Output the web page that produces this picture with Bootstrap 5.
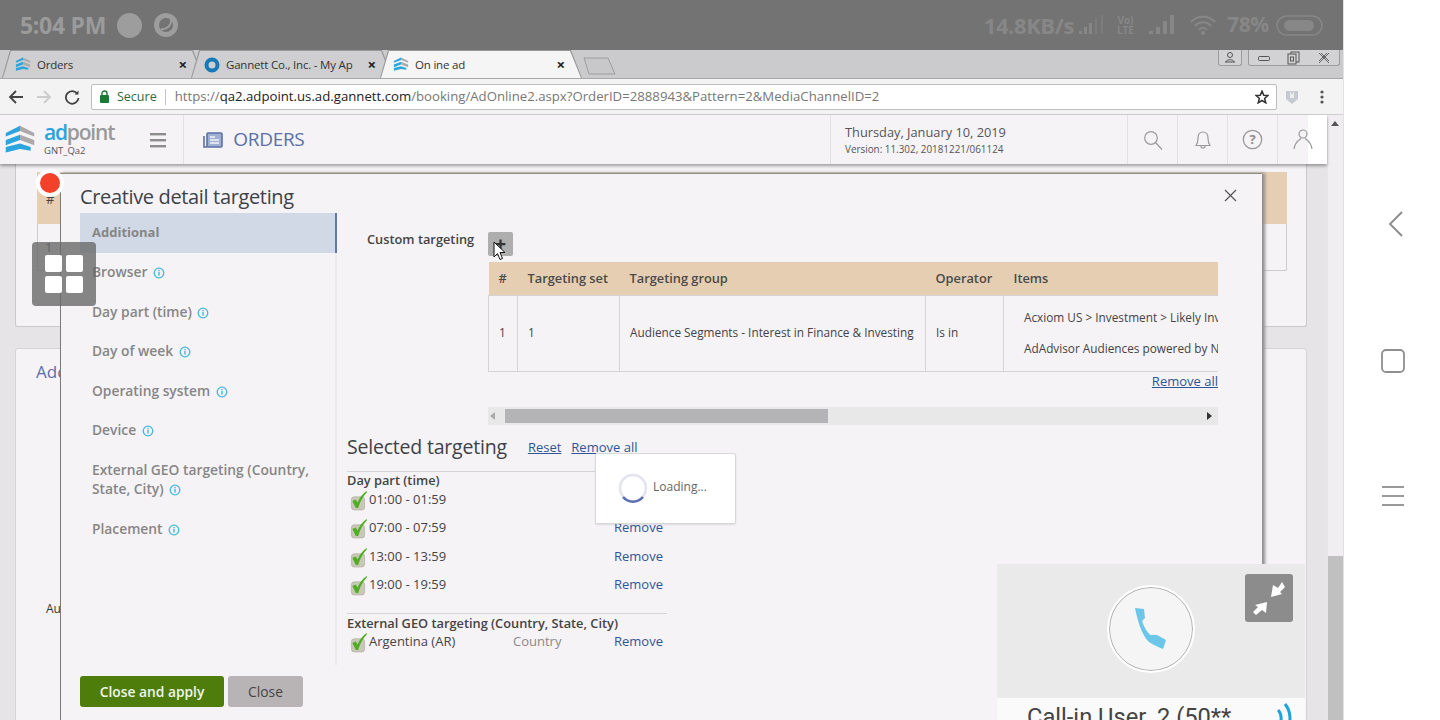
<!DOCTYPE html>
<html lang="en">
<head>
    <meta charset="UTF-8">
    <meta name="viewport" content="width=device-width, initial-scale=1.0">
    <title>Online ad</title>
    <link href="https://cdn.jsdelivr.net/npm/bootstrap@5.3.1/dist/css/bootstrap.min.css" rel="stylesheet">
    <style>
        html, body { height: 720px; overflow: hidden; }
        body { font-family: "Open Sans", "Liberation Sans", sans-serif; font-size: 13px; color: #444; background: #fff; }
        a { color: #2f5597; }
        .screen { width: 1440px; height: 720px; }
        .phone-area { width: 1344px; border-right: 1px solid #e2e2e2; }

        /* android bars */
        .status-bar { height: 50px; background: #737373; color: #878787; padding: 0 20px; font-weight: 700; }
        .status-time { font-size: 23px; color: #9b9b9b; letter-spacing: -.3px; }
        .status-speed { font-size: 22px; letter-spacing: -.4px; }
        .status-pct { font-size: 21px; letter-spacing: -.3px; }
        .status-lte { font-size: 10px; line-height: 10px; text-align: center; width: 19px; }
        .dot-icon { width: 25px; height: 25px; border-radius: 50%; background: #9d9d9d; }
        .sm5 { margin-left: 5px; } .sm7 { margin-left: 7px; } .sm10 { margin-left: 10px; } .sm11 { margin-left: 11px; } .sm12 { margin-left: 12px; } .sm14 { margin-left: 14px; }
        .nav-side { width: 95px; padding-left: 37px; padding-top: 211px; gap: 112px; }
        .nav-back { margin-left: 7px; }

        /* chrome tabs */
        .tab-strip { height: 28px; background: #cbcbcd; padding-left: 2px; }
        .tab-item { width: 202px; margin-right: -13px; padding: 1px 17px 0 13px; font-size: 11.5px; color: #333; letter-spacing: -.2px; position: relative; }
        .tab-item > * { position: relative; z-index: 1; }
        .tab-item::before, .tab-item::after { content: ""; position: absolute; top: 0; bottom: 0; left: 0; right: 0; clip-path: polygon(0 100%, 8px 0, calc(100% - 11px) 0, 100% 100%); }
        .tab-item::before { background: #989898; }
        .tab-item::after { background: #cfcfd1; top: 1px; left: 1px; right: 1px; }
        .tab-item.tab-on { z-index: 2; }
        .tab-item.tab-on::after { background: #f5f5f5; }
        .tab-label { white-space: nowrap; overflow: hidden; width: 132px; margin-left: 6px; }
        .tab-x { font-size: 15px; font-weight: 700; color: #222; margin-left: auto; line-height: 1; }
        .tab-new { margin-left: 14px; margin-top: 7px; }
        .win-btns { margin-left: auto; margin-right: 3px; height: 16px; gap: 6px; }
        .win-box { height: 16px; border: 1px solid #9c9c9c; border-top: 0; border-radius: 0 0 3px 3px; background: #d2d2d4; }
        .win-user { width: 24px; }
        .win-main { width: 92px; }

        /* address bar */
        .addr-bar { height: 37px; background: #f3f3f3; border-top: 1px solid #a8a8a8; border-bottom: 1px solid #cfcfcf; padding-left: 8px; padding-right: 19px; }
        .addr-next { margin-left: 12px; }
        .addr-box { width: 1186px; height: 26px; margin-left: 11px; background: #fff; border: 1px solid #bdbdbd; border-radius: 2px; padding: 0 7px 0 8px; font-size: 13.2px; }
        .addr-secure { color: #2e6b3e; padding: 0 8px 0 8px; border-right: 1px solid #c4c4c4; margin-right: 9px; line-height: 16px; font-size: 12.5px; }
        .addr-url { color: #777; white-space: nowrap; }
        .addr-url b { font-weight: 400; color: #222; }
        .addr-ext { margin-left: 7px; }

        /* app header */
        .app-head { height: 49px; background: #f5f3f6; box-shadow: 0 2px 3px rgba(0,0,0,.35); position: relative; z-index: 3; }
        .logo-word { font-size: 21px; line-height: 21px; font-weight: 600; color: #9a9a9a; letter-spacing: -1.2px; }
        .logo-word span { color: #29a3dd; }
        .logo-sub { font-size: 9.5px; line-height: 15px; color: #555; letter-spacing: 0; }
        .head-burger { margin-left: 36px; }
        .head-cell { height: 49px; border-left: 1px solid #e3e1e4; }
        .head-orders { margin-left: 17px; padding-left: 19px; }
        .head-title { font-size: 19px; font-weight: 500; color: #5b6fa9; letter-spacing: -.3px; margin-left: 10px; }
        .head-date { width: 297px; padding: 2px 0 0 14px; line-height: 1.2; }
        .head-date div:first-child { font-size: 12.8px; color: #555; margin-bottom: 3px; }
        .head-date div:last-child { font-size: 9.9px; color: #555; }
        .head-icon { width: 50px; }
        .head-end { background: linear-gradient(90deg, #f5f3f6 30px, #fff 30px); }

        /* page behind the dialog */
        .page-wrap { height: 556px; background: #e6e4e6; padding: 0 20px 0 15px; position: relative; overflow: hidden; }
        .bg-panel { height: 163px; background: #f5f3f6; border: 1px solid #c9c9c9; border-top: 0; border-radius: 0 0 3px 3px; padding: 8px 19px 0 21px; }
        .bg-thead { height: 52px; background: #e6ceb3; padding: 18px 0 0 9px; }
        .bg-tbody { height: 47px; border: 1px solid #ccc; border-top: 0; padding: 14px 0 0 7px; }
        .bg-panel2 { height: 400px; margin-top: 21px; background: #f5f3f6; border: 1px solid #d4d4d4; border-radius: 3px 3px 0 0; padding: 10px 20px; }
        .bg-title { font-size: 17px; color: #5b6fa9; }
        .bg-au { margin-top: 215px; padding-left: 10px; color: #333; font-size: 12px; }
        .v-scroll { width: 16px; flex: none; background: #f0eef1; border-left: 1px solid #e8e6e9; padding-top: 6px; }
        .v-up { width: 0; height: 0; border: 4px solid transparent; border-top: 0; border-bottom: 5px solid #555; margin-left: 3px; }
        .v-thumb { height: 164px; background: #c0c0c0; }

        /* dialog */
        .tgt-dialog { position: absolute; left: 60px; top: 9px; width: 1202px; height: 560px; background: #f5f3f6; border-left: 1px solid #7a7a7a; border-top: 1px solid #8c8c8c; box-shadow: 3px 0 3px #8e8e8e; padding: 0 44px 0 19px; }
        .tgt-title { height: 39px; font-size: 20px; color: #3d4246; letter-spacing: -.35px; line-height: 46px; }
        .tgt-close { right: 25px; top: 15px; }
        .side-col { width: 257px; height: 452px; flex: none; border-right: 2px solid #ebe9ec; }
        .side-item { padding: 9.5px 12px 10.5px; line-height: 19.5px; font-weight: 600; color: #868686; font-size: 13.8px; }
        .side-item.side-on { padding: 10px 12px; background: #d0d9e5; border-right: 2px solid #5a7ab0; margin-right: -2px; font-size: 13px; font-weight: 700; }
        .side-item svg { vertical-align: -2px; margin-left: 2px; }
        .main-col { padding-left: 10px; flex: 1; min-width: 0; }
        .custom-label { width: 141px; flex: none; padding: 17px 0 0 20px; font-weight: 600; color: #444; font-size: 12.8px; white-space: nowrap; }
        .custom-right { width: 730px; flex: none; padding-top: 19px; }
        .plus-btn { width: 25px; height: 24px; background: #aeaeae; border-radius: 2px; font-size: 20px; line-height: 24px; font-weight: 700; color: #333; text-align: center; position: relative; margin-bottom: 6px; }
        .plus-cursor { position: absolute; left: 5px; top: 9px; }
        .tgt-table { width: 730px; overflow: hidden; height: 111px; }
        .tgt-table table { width: 860px; table-layout: fixed; font-size: 11.8px; color: #444; }
        .tgt-table th { height: 33px; background: #e6ceb3; font-weight: 600; padding: 1px 10px 0; vertical-align: middle; font-size: 12.8px; color: #4a4a4a; white-space: nowrap; }
        .tgt-table td { height: 76px; border: 1px solid #d4d4d6; padding: 0 10px; vertical-align: middle; white-space: nowrap; overflow: hidden; }
        .tgt-table td:first-child { border-left: 1px solid #d4d4d6; }
        .item-line { padding-left: 10px; line-height: 31px; }
        .rm-all { text-align: right; margin-top: -1px; line-height: 18px; }
        .h-scroll { height: 18px; margin-top: 17px; background: #e8e8e8; }
        .h-thumb { width: 323px; height: 14px; background: #b4b4b6; margin-left: 17px; position: relative; top: 2px; }
        .h-arrow-l, .h-arrow-r { width: 0; height: 0; border: 4px solid transparent; }
        .h-arrow-l { border-right: 5px solid #aaa; border-left: 0; position: absolute; left: 2px; top: 5px; }
        .h-arrow-r { border-left: 5px solid #333; border-right: 0; position: absolute; right: 6px; top: 5px; }
        .sel-head { height: 46px; line-height: 44px; padding-bottom: 2px; }
        .sel-title { font-size: 19.5px; color: #3d4246; margin-right: 21px; letter-spacing: -.2px; }
        .sel-link { font-size: 13px; margin-right: 10px; }
        .sel-list { width: 320px; border-top: 1px solid #d4d4d6; }
        .sel-group { font-weight: 600; font-size: 12.8px; color: #444; line-height: 17px; margin-bottom: 1px; }
        .sel-sep + .sel-group { margin-bottom: 0; }
        .sel-row { height: 28.3px; line-height: 18px; padding-left: 3px; }
        .sel-row svg { flex: none; margin: 1px 2px 0 0; }
        .sel-name { width: 144px; }
        .sel-kind { width: 101px; color: #888; }
        .sel-sep { border-top: 1px solid #d4d4d6; margin-top: 10px; padding-top: 1px; }
        .loading-box { position: absolute; left: 534px; top: 279px; width: 141px; height: 71px; background: #fff; border: 1px solid #d8d8d8; border-radius: 2px; padding: 19px 0 0 22px; font-size: 12px; color: #666; box-shadow: 0 1px 2px rgba(0,0,0,.1); gap: 5px; }
        .loading-box span { margin-top: 5px; }
        .dlg-foot { margin-top: 11px; gap: 4px; }
        .dlg-btn-go, .dlg-btn-no { height: 31px; font-size: 13.8px; font-weight: 600; line-height: 29px; padding: 0; border: 0; border-radius: 3px; }
        .dlg-btn-go { width: 144px; background: #4e7d0c; color: #f1f5ea; }
        .dlg-btn-no { width: 75px; background: #b8b4b5; color: #444; font-weight: 400; }

        /* floating stuff */
        .rec-dot { position: absolute; left: 36px; top: 169px; width: 28px; height: 28px; border-radius: 50%; background: #f4412a; border: 4px solid #fff; z-index: 5; }
        .grid-fab { position: absolute; left: 32px; top: 242px; width: 64px; height: 64px; border-radius: 4px; background: rgba(105,105,105,.8); z-index: 5; display: grid; grid-template-columns: 17px 17px; gap: 4px; padding: 13px; }
        .grid-fab i { background: #fff; border-radius: 2px; display: block; height: 17px; }
        .call-box { position: absolute; left: 997px; top: 564px; width: 308px; height: 156px; z-index: 5; background: #eaeaea; overflow: hidden; }
        .call-ring { width: 84px; height: 84px; margin: 23px auto 0; border-radius: 50%; background: #f5f5f5; border: 1.5px solid #b0b0b0; outline: 2px solid #fff; }
        .call-shrink { position: absolute; left: 248px; top: 10px; width: 48px; height: 48px; background: #8c8c8c; border-radius: 3px; }
        .call-name { position: absolute; left: 0; right: 0; top: 134px; height: 30px; background: #fafafa; padding-left: 30px; font-family: Roboto, "Liberation Sans", sans-serif; font-size: 23.7px; line-height: 38px; color: #444; white-space: nowrap; }
        .call-wave { position: absolute; right: 10px; top: 5px; }
    </style>
</head>
<body>

    <!-- iconos repetidos -->
    <svg width="0" height="0" class="position-absolute">
        <symbol id="ico-info" viewBox="0 0 12 12">
            <circle cx="6" cy="6" r="4.8" fill="none" stroke="#45b6dc" stroke-width="1.3"/>
            <rect x="5.3" y="5" width="1.4" height="3.6" fill="#45b6dc"/>
            <rect x="5.3" y="3" width="1.4" height="1.3" fill="#45b6dc"/>
        </symbol>
        <symbol id="ico-check" viewBox="0 0 18 21">
            <rect x="1.5" y="6" width="14" height="14" rx="3" fill="#c9c8b8" stroke="#a9a89c" stroke-width=".6"/>
            <path d="M2.5 10.5 L6 9 L8 12 C10 7.5 13 3.5 17.5 0 L17.9 1.2 C13.5 6 10.5 11.5 8.6 18 L6.2 18 Z" fill="#4fae22"/>
        </symbol>
        <symbol id="ico-logo" viewBox="0 0 18 16">
            <path d="M9 0 L17 4 L17 6 L9 3 Z" fill="#aaa"/>
            <path d="M9 0 L1 4 L1 6 L9 3 Z" fill="#2aa5de"/>
            <path d="M9 5 L17 8 L17 11 L9 8 Z" fill="#aaa"/>
            <path d="M9 5 L1 8 L1 11 L9 8 Z" fill="#2aa5de"/>
            <path d="M1 12 L9 10 L9 13 L1 15 Z" fill="#2aa5de"/>
            <path d="M9 10 L15 12 L15 14 L9 13 Z" fill="#2aa5de"/>
        </symbol>
    </svg>

    <div class="screen d-flex position-relative">
        <div class="phone-area d-flex flex-column">

            <!-- Barra de estado -->
            <div class="status-bar d-flex align-items-center">
                <span class="status-time">5:04 PM</span>
                <span class="dot-icon sm11"></span>
                <svg class="sm11" width="26" height="26" viewBox="0 0 26 26"><circle cx="13" cy="13" r="12" fill="#9d9d9d"/><circle cx="13" cy="13" r="7" fill="#737373"/><path d="M8 17 C14 18 19 13 18 6" stroke="#9d9d9d" stroke-width="2" fill="none"/></svg>
                <div class="ms-auto d-flex align-items-center">
                    <span class="status-speed">14.8KB/s</span>
                    <svg class="sm5" width="27" height="22" viewBox="0 0 27 22"><rect x="0" y="17" width="3" height="3" fill="#878787"/><rect x="5" y="13" width="3" height="7" fill="#878787"/><rect x="10" y="9" width="3" height="11" fill="#878787"/><rect x="16" y="4" width="2" height="16" fill="#7d7d7d"/><rect x="22" y="1" width="2" height="19" fill="#7d7d7d"/></svg>
                    <span class="status-lte sm10">Vo)<br>LTE</span>
                    <svg class="sm14" width="28" height="22" viewBox="0 0 28 22"><rect x="0" y="17" width="4" height="3" fill="#878787"/><rect x="7" y="13" width="4" height="7" fill="#878787"/><rect x="14" y="7" width="4" height="13" fill="#878787"/><rect x="21" y="1" width="4" height="19" fill="#878787"/></svg>
                    <svg class="sm12" width="28" height="22" viewBox="0 0 28 22" fill="none" stroke="#878787" stroke-width="2.2"><path d="M2 8 C8 1 20 1 26 8"/><path d="M6 12 C10 7 18 7 22 12"/><path d="M10 16 C12 13 16 13 18 16"/><circle cx="14" cy="19" r="1" fill="#878787"/></svg>
                    <span class="status-pct sm10">78%</span>
                    <svg class="sm7" width="47" height="21" viewBox="0 0 47 21"><rect x="1" y="1" width="45" height="19" rx="9.5" fill="none" stroke="#878787" stroke-width="1.6"/><rect x="8" y="5" width="30" height="11" rx="5.5" fill="#878787"/></svg>
                </div>
            </div>

            <!-- Pestanas -->
            <div class="tab-strip d-flex">
                <div class="tab-item d-flex align-items-center">
                    <svg width="16" height="15"><use href="#ico-logo"/></svg>
                    <span class="tab-label">Orders</span>
                    <span class="tab-x">×</span>
                </div>
                <div class="tab-item d-flex align-items-center">
                    <svg width="16" height="16" viewBox="0 0 16 16"><circle cx="8" cy="8" r="5.5" fill="none" stroke="#1679b8" stroke-width="4"/></svg>
                    <span class="tab-label">Gannett Co., Inc. - My Ap</span>
                    <span class="tab-x">×</span>
                </div>
                <div class="tab-item tab-on d-flex align-items-center">
                    <svg width="16" height="15"><use href="#ico-logo"/></svg>
                    <span class="tab-label">On ine ad</span>
                    <span class="tab-x">×</span>
                </div>
                <svg class="tab-new" width="33" height="18" viewBox="0 0 33 18"><path d="M1 1 H25 L32 17 H6 Z" fill="#c8c8ca" stroke="#9e9e9e"/></svg>
                <div class="win-btns d-flex">
                    <div class="win-box win-user d-flex align-items-center justify-content-center">
                        <svg width="14" height="13" viewBox="0 0 14 13" fill="none" stroke="#555"><circle cx="7" cy="4" r="2.5"/><path d="M2 11 h10 M3 11 C3 8 11 8 11 11"/></svg>
                    </div>
                    <div class="win-box win-main d-flex align-items-center justify-content-around">
                        <svg width="12" height="8" viewBox="0 0 12 8" fill="none" stroke="#555"><rect x=".5" y="2.5" width="11" height="4" rx="1"/></svg>
                        <svg width="13" height="14" viewBox="0 0 13 14" fill="none" stroke="#555"><rect x="4" y="1" width="8" height="10"/><rect x="1" y="3" width="8" height="10" fill="#d2d2d4"/><rect x="3.5" y="6" width="3" height="4"/></svg>
                        <svg width="14" height="12" viewBox="0 0 14 12" fill="none" stroke="#666"><path d="M2 1 L12 11 M12 1 L2 11 M4 1 L12 9 M10 1 L2 9"/></svg>
                    </div>
                </div>
            </div>

            <!-- Barra de direccion -->
            <div class="addr-bar d-flex align-items-center">
                <svg width="16" height="16" viewBox="0 0 16 16" fill="none" stroke="#444" stroke-width="1.8"><path d="M15 8 H2 M8 2 L2 8 L8 14"/></svg>
                <svg class="addr-next" width="16" height="16" viewBox="0 0 16 16" fill="none" stroke="#ccc" stroke-width="1.8"><path d="M1 8 H14 M8 2 L14 8 L8 14"/></svg>
                <svg class="addr-next" width="16" height="16" viewBox="0 0 16 16" fill="none" stroke="#444" stroke-width="1.8"><path d="M13.5 5 A6.3 6.3 0 1 0 14.5 9"/><path d="M14.5 1.5 V5.5 H10.5 Z" fill="#444" stroke="none"/></svg>
                <div class="addr-box d-flex align-items-center">
                    <svg width="9" height="13" viewBox="0 0 9 13"><rect x="0" y="5" width="9" height="8" rx="1" fill="#1a7a32"/><path d="M2 6 V3.5 a2.5 2.5 0 0 1 5 0 V6" fill="none" stroke="#1a7a32" stroke-width="1.4"/></svg>
                    <span class="addr-secure">Secure</span>
                    <span class="addr-url">https://<b>qa2.adpoint.us.ad.gannett.com</b>/booking/AdOnline2.aspx?OrderID=2888943&amp;Pattern=2&amp;MediaChannelID=2</span>
                    <svg class="ms-auto" width="14" height="14" viewBox="0 0 24 24" fill="none" stroke="#333" stroke-width="2.6"><path d="M12 2 L15 9 L22 9.5 L16.5 14.5 L18.5 22 L12 18 L5.5 22 L7.5 14.5 L2 9.5 L9 9 Z"/></svg>
                </div>
                <svg class="addr-ext" width="16" height="16" viewBox="0 0 16 16"><path d="M2 2 H14 V10 L8 15 L2 10 Z" fill="#c6c9cf"/><path d="M6 2 L8 6 L10 2 V9 H6 Z" fill="#eee"/></svg>
                <svg class="ms-auto" width="4" height="16" viewBox="0 0 4 16" fill="#555"><circle cx="2" cy="3" r="1.6"/><circle cx="2" cy="8" r="1.6"/><circle cx="2" cy="13" r="1.6"/></svg>
            </div>

            <div class="d-flex flex-grow-1">
                <div class="flex-grow-1">
                    <!-- Cabecera de la aplicacion -->
                    <div class="app-head d-flex align-items-center">
                        <svg class="ms-1" width="32" height="30"><use href="#ico-logo"/></svg>
                        <div class="ms-2">
                            <div class="logo-word"><span>ad</span>point</div>
                            <div class="logo-sub">GNT_Qa2</div>
                        </div>
                        <svg class="head-burger" width="16" height="16" viewBox="0 0 16 16" fill="#8d8d8d"><rect y="1" width="16" height="2.4"/><rect y="7" width="16" height="2.4"/><rect y="13" width="16" height="2.4"/></svg>
                        <div class="head-cell head-orders d-flex align-items-center flex-grow-1">
                            <svg width="20" height="16" viewBox="0 0 20 16" fill="none" stroke="#5b6fa9" stroke-width="1.6"><rect x="4" y="1" width="15" height="14" rx="1" fill="#9fb0d2"/><path d="M1 4 V15 H4"/><path d="M7 5 H12 M7 8 H16 M7 11 H16" stroke="#f5f3f6"/></svg>
                            <span class="head-title">ORDERS</span>
                        </div>
                        <div class="head-cell head-date d-flex flex-column justify-content-center">
                            <div>Thursday, January 10, 2019</div>
                            <div>Version: 11.302, 20181221/061124</div>
                        </div>
                        <div class="head-cell head-icon d-flex align-items-center justify-content-center">
                            <svg width="20" height="20" viewBox="0 0 20 20" fill="none" stroke="#9a9a9a" stroke-width="1.2"><circle cx="8" cy="8" r="6.3"/><path d="M12.5 12.5 L19 19.5"/></svg>
                        </div>
                        <div class="head-cell head-icon d-flex align-items-center justify-content-center">
                            <svg width="20" height="20" viewBox="0 0 20 20" fill="none" stroke="#9a9a9a" stroke-width="1.2"><path d="M3 15.5 C5 13 5 11 5 8 C5 4 7 2 10 2 C13 2 15 4 15 8 C15 11 15 13 17 15.5 Z"/><path d="M8 16 a2 2 0 0 0 4 0"/></svg>
                        </div>
                        <div class="head-cell head-icon d-flex align-items-center justify-content-center">
                            <svg width="21" height="21" viewBox="0 0 21 21"><circle cx="10.5" cy="10.5" r="9.2" fill="none" stroke="#9a9a9a" stroke-width="1.3"/><text x="10.5" y="15" text-anchor="middle" font-size="13" font-weight="700" fill="#8d8d8d" font-family="Open Sans">?</text></svg>
                        </div>
                        <div class="head-cell head-icon head-end d-flex align-items-center justify-content-center">
                            <svg width="20" height="21" viewBox="0 0 20 21" fill="none" stroke="#9a9a9a" stroke-width="1.2"><circle cx="10" cy="5" r="4"/><path d="M1 20 C2 13 6 11 8 9.5 M19 20 C18 13 14 11 12 9.5"/></svg>
                        </div>
                    </div>

                    <!-- Pagina detras del dialogo -->
                    <div class="page-wrap">
                        <div class="bg-panel">
                            <div class="bg-thead">#</div>
                            <div class="bg-tbody">1</div>
                        </div>
                        <div class="bg-panel2">
                            <div class="bg-title">Additional</div>
                            <div class="bg-au">Audience</div>
                        </div>

                        <!-- Dialogo -->
                        <div class="tgt-dialog">
                            <div class="tgt-title">Creative detail targeting</div>
                            <svg class="tgt-close position-absolute" width="13" height="13" viewBox="0 0 13 13" stroke="#555" stroke-width="1.2"><path d="M1 1 L12 12 M12 1 L1 12"/></svg>

                            <div class="d-flex">
                                <div class="side-col">
                                    <div class="side-item side-on">Additional</div>
                                    <div class="side-item">Browser <svg width="12" height="12"><use href="#ico-info"/></svg></div>
                                    <div class="side-item">Day part (time) <svg width="12" height="12"><use href="#ico-info"/></svg></div>
                                    <div class="side-item">Day of week <svg width="12" height="12"><use href="#ico-info"/></svg></div>
                                    <div class="side-item">Operating system <svg width="12" height="12"><use href="#ico-info"/></svg></div>
                                    <div class="side-item">Device <svg width="12" height="12"><use href="#ico-info"/></svg></div>
                                    <div class="side-item">External GEO targeting (Country, State, City) <svg width="12" height="12"><use href="#ico-info"/></svg></div>
                                    <div class="side-item">Placement <svg width="12" height="12"><use href="#ico-info"/></svg></div>
                                </div>

                                <div class="main-col">
                                    <div class="d-flex">
                                        <div class="custom-label">Custom targeting</div>
                                        <div class="custom-right">
                                            <div class="plus-btn">+
                                                <svg class="plus-cursor" width="13" height="20" viewBox="0 0 13 20"><path d="M1 1 V16 L4.5 12.5 L7 18.5 L9.5 17.5 L7 11.5 H12 Z" fill="#fff" stroke="#111" stroke-width="1"/></svg>
                                            </div>
                                            <div class="tgt-table">
                                                <table>
                                                    <colgroup><col style="width:29px"><col style="width:102px"><col style="width:306px"><col style="width:78px"><col style="width:345px"></colgroup>
                                                    <thead>
                                                        <tr><th>#</th><th>Targeting set</th><th>Targeting group</th><th>Operator</th><th>Items</th></tr>
                                                    </thead>
                                                    <tbody>
                                                        <tr>
                                                            <td>1</td>
                                                            <td>1</td>
                                                            <td>Audience Segments - Interest in Finance &amp; Investing</td>
                                                            <td>Is in</td>
                                                            <td>
                                                                <div class="item-line">Acxiom US &gt; Investment &gt; Likely Investors</div>
                                                                <div class="item-line">AdAdvisor Audiences powered by Neustar</div>
                                                            </td>
                                                        </tr>
                                                    </tbody>
                                                </table>
                                            </div>
                                            <div class="rm-all"><a href="#">Remove all</a></div>
                                            <div class="h-scroll position-relative">
                                                <span class="h-arrow-l"></span>
                                                <div class="h-thumb"></div>
                                                <span class="h-arrow-r"></span>
                                            </div>
                                        </div>
                                    </div>

                                    <div class="sel-head d-flex align-items-center">
                                        <span class="sel-title">Selected targeting</span>
                                        <a class="sel-link" href="#">Reset</a>
                                        <a class="sel-link" href="#">Remove all</a>
                                    </div>
                                    <div class="sel-list">
                                        <div class="sel-group">Day part (time)</div>
                                        <div class="sel-row d-flex">
                                            <svg width="17" height="20"><use href="#ico-check"/></svg>
                                            <span class="sel-name">01:00 - 01:59</span><span class="sel-kind"></span><a class="text-decoration-none" href="#">Remove</a>
                                        </div>
                                        <div class="sel-row d-flex">
                                            <svg width="17" height="20"><use href="#ico-check"/></svg>
                                            <span class="sel-name">07:00 - 07:59</span><span class="sel-kind"></span><a class="text-decoration-none" href="#">Remove</a>
                                        </div>
                                        <div class="sel-row d-flex">
                                            <svg width="17" height="20"><use href="#ico-check"/></svg>
                                            <span class="sel-name">13:00 - 13:59</span><span class="sel-kind"></span><a class="text-decoration-none" href="#">Remove</a>
                                        </div>
                                        <div class="sel-row d-flex">
                                            <svg width="17" height="20"><use href="#ico-check"/></svg>
                                            <span class="sel-name">19:00 - 19:59</span><span class="sel-kind"></span><a class="text-decoration-none" href="#">Remove</a>
                                        </div>
                                        <div class="sel-sep"></div>
                                        <div class="sel-group">External GEO targeting (Country, State, City)</div>
                                        <div class="sel-row d-flex">
                                            <svg width="17" height="20"><use href="#ico-check"/></svg>
                                            <span class="sel-name">Argentina (AR)</span><span class="sel-kind">Country</span><a class="text-decoration-none" href="#">Remove</a>
                                        </div>
                                    </div>
                                </div>
                            </div>

                            <div class="dlg-foot d-flex">
                                <button class="dlg-btn-go" type="button">Close and apply</button>
                                <button class="dlg-btn-no" type="button">Close</button>
                            </div>

                            <div class="loading-box d-flex align-items-start">
                                <svg width="30" height="30" viewBox="0 0 30 30" fill="none" stroke-width="2.5"><circle cx="15" cy="15" r="13" stroke="#e2e3ee"/><path d="M5 24 A13 13 0 0 0 25 24" stroke="#5a6fb0"/></svg>
                                <span>Loading...</span>
                            </div>
                        </div>
                    </div>
                </div>
                <div class="v-scroll d-flex flex-column">
                    <div class="v-up"></div>
                    <div class="v-thumb mt-auto"></div>
                </div>
            </div>
        </div>

        <!-- Botones de android -->
        <div class="nav-side d-flex flex-column">
            <svg class="nav-back" width="16" height="26" viewBox="0 0 16 26" fill="none" stroke="#8a8a8a" stroke-width="1.8"><path d="M14 1 L2 13 L14 25"/></svg>
            <svg width="24" height="24" viewBox="0 0 24 24" fill="none" stroke="#8f8f8f" stroke-width="1.8"><rect x="1" y="1" width="22" height="22" rx="4"/></svg>
            <svg width="24" height="22" viewBox="0 0 24 22" fill="#999"><rect x="1" y="1" width="22" height="2"/><rect x="1" y="10" width="22" height="2"/><rect x="1" y="19" width="22" height="2"/></svg>
        </div>

        <!-- Elementos flotantes -->
        <div class="rec-dot"></div>
        <div class="grid-fab"><i></i><i></i><i></i><i></i></div>
        <div class="call-box">
            <div class="call-ring d-flex align-items-center justify-content-center">
                <svg width="34" height="44" viewBox="0 0 34 44"><path d="M1 1 L10 2 L11 11 L8 14 C10 20 13 25 16.5 28 L23 28 L32 33 L29 42 C22 39 18 37 15 35 C10 30 5 21 1 1 Z" fill="#6bc7ea"/></svg>
            </div>
            <div class="call-shrink">
                <svg class="d-block" width="48" height="48" viewBox="0 0 48 48" fill="#fff"><path d="M26 23 L28 11 L33 14 L37 8 L40 13 L35 18 L37 20 Z"/><path d="M22 28 L21 39 L17 36 L11 41 L8 38 L13 33 L10 31 Z"/></svg>
            </div>
            <div class="call-name">Call-in User_2 (50**
                <svg class="call-wave" width="18" height="26" viewBox="0 0 18 26" fill="none" stroke="#1ba3dc" stroke-width="3"><path d="M1 7 C5 11 5 18 2 24"/><path d="M8 1 C14 8 14 18 11 26"/></svg>
            </div>
        </div>
    </div>

    <script src="https://cdn.jsdelivr.net/npm/bootstrap@5.3.1/dist/js/bootstrap.bundle.min.js"></script>
</body>
</html>
